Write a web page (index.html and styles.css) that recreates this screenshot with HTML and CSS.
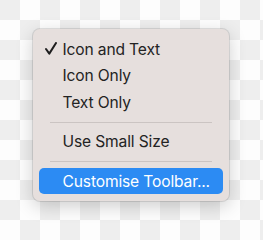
FILE: index.html
```html
<!DOCTYPE html>
<html lang="en">
<head>
<meta charset="utf-8">
<title>Toolbar menu</title>
<link rel="stylesheet" href="styles.css">
</head>
<body>
<div class="stage">
  <div class="menu" role="menu">
    <div class="item" role="menuitemradio" aria-checked="true">
      <span class="check">
        <svg width="12" height="13" viewBox="0 0 12 13"><path d="M1 7 L4.3 11.6 L11 1" fill="none" stroke="#1e1e1e" stroke-width="2" stroke-linecap="round" stroke-linejoin="round"/></svg>
      </span>
      <span class="label">Icon and Text</span>
    </div>
    <div class="item" role="menuitemradio"><span class="check"></span><span class="label">Icon Only</span></div>
    <div class="item" role="menuitemradio"><span class="check"></span><span class="label">Text Only</span></div>
    <div class="sep"></div>
    <div class="item" role="menuitem"><span class="check"></span><span class="label">Use Small Size</span></div>
    <div class="sep"></div>
    <div class="item active" role="menuitem"><span class="check"></span><span class="label">Customise Toolbar...</span></div>
  </div>
</div>
</body>
</html>
```
FILE: styles.css
```css
html, body {
  margin: 0;
  padding: 0;
}
body {
  width: 263px;
  height: 240px;
  overflow: hidden;
  background-color: #ffffff;
  background-image: repeating-conic-gradient(#fdfdfd 0 25%, #eeeeee 0 50%);
  background-size: 40px 40px;
  background-position: 0 0;
  font-family: "Inter", "Liberation Sans", sans-serif;
}
.stage {
  padding: 29px 0 0 33px;
}
.menu {
  width: 184px;
  padding: 7px 6px;
  background: #e6dfdd;
  border-radius: 7px;
  box-shadow: 0 0 0 1px rgba(0,0,0,0.10), 0 5px 18px rgba(0,0,0,0.19);
  display: flex;
  flex-direction: column;
}
.item {
  height: 26.5px;
  display: flex;
  align-items: center;
  border-radius: 5px;
  color: #232323;
  font-size: 15.6px;
  letter-spacing: -0.15px;
}
.check {
  width: 23.5px;
  padding-left: 6px;
  box-sizing: border-box;
  display: flex;
  align-items: center;
  height: 100%;
}
.check svg {
  display: block;
  margin-top: -1px;
}
.label {
  white-space: nowrap;
}
.sep {
  height: 13px;
  display: flex;
  align-items: center;
  padding: 0 11px;
}
.sep::before {
  content: "";
  flex: 1;
  height: 1px;
  background: #cbc4c2;
}
.item.active {
  height: 26px;
  background: #2c8bf3;
  color: #ffffff;
}
```
